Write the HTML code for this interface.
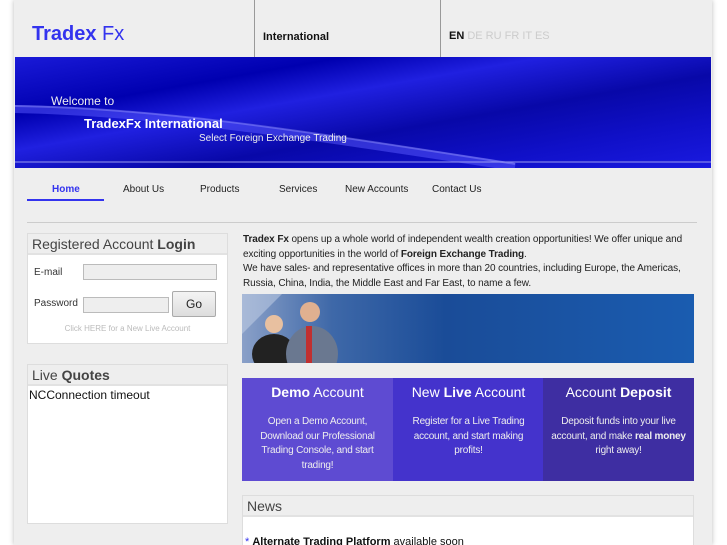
<!DOCTYPE html>
<html style="overflow:hidden;height:545px"><head><style>
*{margin:0;padding:0;box-sizing:border-box}
body{width:727px;height:545px;overflow:hidden;background:#fff;font-family:"Liberation Sans",sans-serif;position:relative}
.wrap{position:absolute;left:14px;top:0;width:698px;height:545px;background:#eee;box-shadow:0 0 5px #bbb}
.a{position:absolute}
.nav{font-size:10px;color:#222;top:184px}
.box{background:#fff;border:1px solid #ddd}
.bh{background:#eee;border-bottom:2px solid #e2e2e2;color:#444;font-size:14px;padding:2px 4px;height:21px}
.col{position:absolute;top:378px;height:103px;width:151px;color:#fff;text-align:center}
.col h3{font-weight:normal;font-size:14px;margin-top:6px}
.col p{font-size:10px;line-height:14.5px;margin-top:15px;color:#eee;padding:0 14px;letter-spacing:-0.2px}
input{position:absolute;border:1px solid #bbb;background:#eee;height:16px}
</style></head><body>
<div class="wrap"></div>
<div class="a" style="left:254px;top:0;width:1px;height:57px;background:#999"></div>
<div class="a" style="left:440px;top:0;width:1px;height:57px;background:#999"></div>
<div class="a" style="left:32px;top:23px;font-size:20px;color:#3333ee"><b>Tradex</b> Fx</div>
<div class="a" style="left:263px;top:31px;font-size:11px;font-weight:bold;color:#111">International</div>
<div class="a" style="left:449px;top:30px;font-size:11px;color:#ccc"><b style="color:#111">EN</b> DE RU FR IT ES</div>
<div class="a" style="left:15px;top:57px;width:696px;height:111px;background:linear-gradient(170deg,#1a1ad8 0%,#0000b0 25%,#2020e0 40%,#0808a8 60%,#1010c8 80%,#1a1ae0 100%);overflow:hidden">
<svg width="696" height="111" style="position:absolute;left:0;top:0"><path d="M0 52 C150 55 300 80 500 110" stroke="#5a5aff" stroke-width="8" fill="none" opacity=".5"/><path d="M0 49 C150 51 300 76 500 107" stroke="#a0a0ff" stroke-width="2" fill="none" opacity=".4"/><line x1="0" y1="105" x2="696" y2="105" stroke="#9a9af0" stroke-width="1"/></svg>
<div class="a" style="left:36px;top:37px;color:#eee;font-size:12px">Welcome to</div>
<div class="a" style="left:69px;top:59px;color:#fff;font-size:13px;font-weight:bold">TradexFx International</div>
<div class="a" style="left:184px;top:76px;color:#eee;font-size:10px">Select Foreign Exchange Trading</div>
</div>
<div class="a nav" style="left:52px;color:#3333ee;font-weight:bold">Home</div>
<div class="a" style="left:27px;top:199px;width:77px;height:2px;background:#3333ee"></div>
<div class="a nav" style="left:123px">About Us</div>
<div class="a nav" style="left:200px">Products</div>
<div class="a nav" style="left:279px">Services</div>
<div class="a nav" style="left:345px">New Accounts</div>
<div class="a nav" style="left:432px">Contact Us</div>
<div class="a" style="left:27px;top:222px;width:670px;height:1px;background:#ccc"></div>

<div class="a box" style="left:27px;top:233px;width:201px;height:111px">
<div class="bh">Registered Account <b>Login</b></div>
<div class="a" style="left:6px;top:33px;font-size:10px;color:#333">E-mail</div>
<input style="left:55px;top:30px;width:134px">
<div class="a" style="left:6px;top:64px;font-size:10px;color:#333">Password</div>
<input style="left:55px;top:63px;width:86px">
<div class="a" style="left:144px;top:57px;width:44px;height:26px;border:1px solid #aaa;border-radius:2px;background:linear-gradient(#f4f4f4,#ddd);font-size:12px;text-align:center;line-height:24px;color:#222">Go</div>
<div class="a" style="left:0;top:90px;width:199px;text-align:center;font-size:8px;color:#bbb">Click HERE for a New Live Account</div>
</div>
<div class="a box" style="left:27px;top:364px;width:201px;height:160px">
<div class="bh">Live <b>Quotes</b></div>
<div style="font-size:12px;color:#111;padding:2px 1px">NCConnection timeout</div>
</div>

<div class="a" style="left:243px;top:233px;width:455px;font-size:10px;line-height:14.5px;color:#222;letter-spacing:-0.1px"><b>Tradex Fx</b> opens up a whole world of independent wealth creation opportunities! We offer unique and exciting opportunities in the world of <b>Foreign Exchange Trading</b>.<br>We have sales- and representative offices in more than 20 countries, including Europe, the Americas, Russia, China, India, the Middle East and Far East, to name a few.</div>
<div class="a" style="left:242px;top:294px;width:452px;height:69px;background:linear-gradient(90deg,#8aa0c8 0%,#3e68a8 20%,#1a4c98 45%,#1a5cb0 100%);overflow:hidden">
<svg width="452" height="69"><path d="M0 0 L40 0 L0 40Z" fill="#c8d4e8" opacity=".5"/><ellipse cx="32" cy="60" rx="22" ry="20" fill="#222"/><circle cx="32" cy="30" r="9" fill="#e8c0a0"/><ellipse cx="70" cy="60" rx="26" ry="28" fill="#6a7890"/><circle cx="68" cy="18" r="10" fill="#e0b090"/><rect x="64" y="32" width="6" height="37" fill="#c03030"/></svg>
</div>
<div class="col" style="left:242px;background:#5e4bd2"><h3><b>Demo</b> Account</h3><p>Open a Demo Account, Download our Professional Trading Console, and start trading!</p></div>
<div class="col" style="left:393px;background:#4433cc"><h3>New <b>Live</b> Account</h3><p>Register for a Live Trading account, and start making profits!</p></div>
<div class="col" style="left:543px;background:#3e2ea2"><h3>Account <b>Deposit</b></h3><p style="padding:0 2px">Deposit funds into your live account, and make <b>real money</b> right away!</p></div>
<div class="a box" style="left:242px;top:495px;width:452px;height:50px;border-bottom:none;overflow:hidden">
<div class="bh">News</div>
<div class="a" style="left:2px;top:40px;font-size:11px;color:#111;white-space:nowrap"><span style="color:#33e">*</span> <b>Alternate Trading Platform</b> available soon</div>
</div>
</body></html>
